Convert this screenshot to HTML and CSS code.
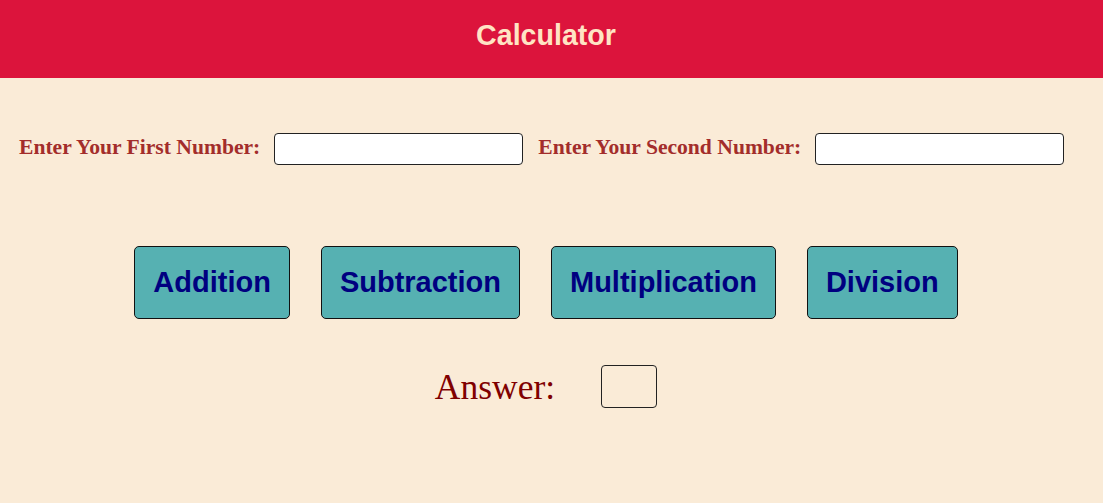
FILE: index.html
```html
<!DOCTYPE html>
<html>
<head>
<meta charset="utf-8">
<link rel="stylesheet" href="styles.css">
</head>
<body>
<header class="top">
  <h1 class="title">Calculator</h1>
</header>
<main class="main">
  <div class="inputs">
    <label class="lbl">Enter Your First Number:</label>
    <input class="num" type="text">
    <label class="lbl lbl2">Enter Your Second Number:</label>
    <input class="num" type="text">
  </div>
  <div class="ops">
    <button class="op">Addition</button>
    <button class="op">Subtraction</button>
    <button class="op">Multiplication</button>
    <button class="op">Division</button>
  </div>
  <div class="answer">
    <span class="ans-label">Answer:</span>
    <span class="ans-box"></span>
  </div>
</main>
</body>
</html>
```
FILE: styles.css
```css
html, body {
  margin: 0;
  padding: 0;
}
body {
  background: #FAEBD7;
  width: 1103px;
  height: 503px;
  overflow: hidden;
}
.top {
  background: #DC143C;
  height: 78px;
  display: flex;
  align-items: center;
  justify-content: center;
  padding-right: 11px;
}
.title {
  margin: 0;
  font-family: "Liberation Sans", Arial, sans-serif;
  font-weight: bold;
  font-size: 28.6px;
  color: #FFE4C4;
  padding-bottom: 8px;
}
.main {
  display: flex;
  flex-direction: column;
}
.inputs {
  display: flex;
  align-items: center;
  margin-top: 55px;
  padding-left: 19px;
  height: 32px;
}
.lbl {
  font-family: "Liberation Serif", "Times New Roman", serif;
  font-weight: bold;
  font-size: 21.6px;
  color: #A32D2B;
  margin-right: 14px;
  padding-bottom: 3px;
}
.lbl2 {
  margin-left: 15px;
}
.num {
  box-sizing: border-box;
  width: 249px;
  height: 32px;
  border: 1px solid #222;
  border-radius: 4px;
  background: #fff;
  margin: 0;
  padding: 0 4px;
}
.ops {
  display: flex;
  justify-content: center;
  gap: 31px;
  margin-top: 81px;
  padding-right: 11px;
}
.op {
  box-sizing: border-box;
  height: 73px;
  padding: 0 18px;
  font-family: "Liberation Sans", Arial, sans-serif;
  font-weight: bold;
  font-size: 29px;
  color: #000080;
  background: #56B1B2;
  border: 1px solid #111;
  border-radius: 5px;
  margin: 0;
}
.answer {
  display: flex;
  justify-content: center;
  align-items: center;
  gap: 46px;
  margin-top: 46px;
  padding-right: 11px;
}
.ans-label {
  font-family: "Liberation Serif", "Times New Roman", serif;
  font-size: 35.5px;
  color: #800000;
}
.ans-box {
  box-sizing: border-box;
  width: 56px;
  height: 43px;
  border: 1px solid #222;
  border-radius: 4px;
}
```
